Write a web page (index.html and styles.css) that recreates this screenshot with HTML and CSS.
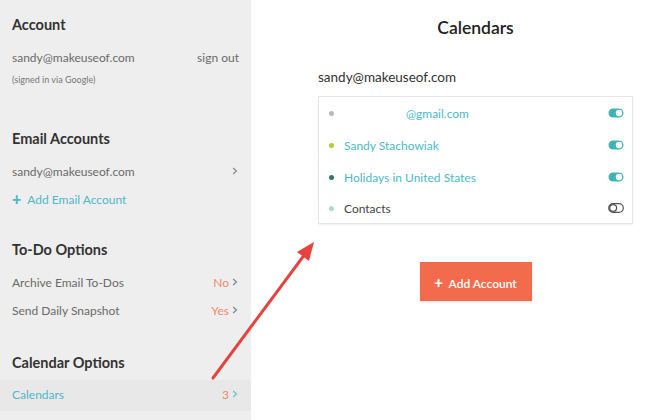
FILE: index.html
```html
<!DOCTYPE html>
<html>
<head>
<meta charset="utf-8">
<link rel="stylesheet" href="styles.css">
</head>
<body>
<div class="app">
  <aside class="sidebar">
    <h2 class="h h-first">Account</h2>
    <div class="row r-email"><span>sandy@makeuseof.com</span><span>sign out</span></div>
    <div class="note">(signed in via Google)</div>

    <h2 class="h h-sec">Email Accounts</h2>
    <div class="row r-item"><span>sandy@makeuseof.com</span><svg class="chev" width="6" height="8" viewBox="0 0 6 8"><path d="M1.2 1 L4.4 4 L1.2 7" fill="none" stroke="#8a8a8a" stroke-width="1.2"/></svg></div>
    <div class="row add"><span class="plus">+</span> Add Email Account</div>

    <h2 class="h h-sec2">To-Do Options</h2>
    <div class="row r-item"><span>Archive Email To-Dos</span><span class="right"><span class="val">No</span><svg class="chev" width="6" height="8" viewBox="0 0 6 8"><path d="M1.2 1 L4.4 4 L1.2 7" fill="none" stroke="#7d8aa0" stroke-width="1.3"/></svg></span></div>
    <div class="row"><span>Send Daily Snapshot</span><span class="right"><span class="val">Yes</span><svg class="chev" width="6" height="8" viewBox="0 0 6 8"><path d="M1.2 1 L4.4 4 L1.2 7" fill="none" stroke="#7d8aa0" stroke-width="1.3"/></svg></span></div>

    <h2 class="h h-sec3">Calendar Options</h2>
    <div class="row active"><span class="teal">Calendars</span><span class="right"><span class="val">3</span><svg class="chev" width="6" height="8" viewBox="0 0 6 8"><path d="M1.2 1 L4.4 4 L1.2 7" fill="none" stroke="#6cc3d4" stroke-width="1.3"/></svg></span></div>
  </aside>

  <main class="main">
    <div class="col">
      <h1 class="title">Calendars</h1>
      <div class="acct">sandy@makeuseof.com</div>
      <div class="card">
        <div class="cal"><span class="dot d1"></span><span class="name teal gm">@gmail.com</span>
          <svg class="tog" viewBox="0 0 16 10" width="16" height="10"><rect x="0.5" y="0.5" width="15" height="9" rx="4.5" fill="#3fb5b5"/><circle cx="11" cy="5" r="3.2" fill="#fff"/></svg></div>
        <div class="cal"><span class="dot d2"></span><span class="name teal">Sandy Stachowiak</span>
          <svg class="tog" viewBox="0 0 16 10" width="16" height="10"><rect x="0.5" y="0.5" width="15" height="9" rx="4.5" fill="#3fb5b5"/><circle cx="11" cy="5" r="3.2" fill="#fff"/></svg></div>
        <div class="cal"><span class="dot d3"></span><span class="name teal">Holidays in United States</span>
          <svg class="tog" viewBox="0 0 16 10" width="16" height="10"><rect x="0.5" y="0.5" width="15" height="9" rx="4.5" fill="#3fb5b5"/><circle cx="11" cy="5" r="3.2" fill="#fff"/></svg></div>
        <div class="cal"><span class="dot d4"></span><span class="name">Contacts</span>
          <svg class="tog" viewBox="0 0 16 10" width="16" height="10"><rect x="0.7" y="0.7" width="14.6" height="8.6" rx="4.3" fill="none" stroke="#555" stroke-width="1.2"/><circle cx="5.2" cy="5" r="3.4" fill="none" stroke="#555" stroke-width="1.2"/></svg></div>
      </div>
      <div class="btnwrap"><button class="btn"><span class="bplus">+</span> Add Account</button></div>
    </div>
  </main>

  <svg class="arrow" width="647" height="420" viewBox="0 0 647 420">
    <line x1="213" y1="378" x2="305" y2="254" stroke="#e4443c" stroke-width="3" stroke-linecap="round"/>
    <polygon points="314,242 297,252 309,261" fill="#e4443c"/>
  </svg>
</div>
</body>
</html>
```

FILE: styles.css
```css
* { box-sizing: border-box; margin: 0; padding: 0; }
html, body { width: 647px; height: 420px; overflow: hidden; background: #fff; }
body { font-family: Lato, "Open Sans", sans-serif; color: #333; }

.app { position: relative; display: flex; width: 647px; height: 420px; }

.sidebar {
  width: 251px;
  height: 420px;
  background: #eeeeee;
  padding-top: 15px;
  display: flex;
  flex-direction: column;
}
.h {
  font-size: 14.5px;
  font-weight: 700;
  color: #333;
  height: 20px;
  line-height: 20px;
  padding: 0 12px;
}
.h-sec { margin-top: 42px; }
.h-sec2 { margin-top: 27px; }
.h-sec3 { margin-top: 29px; }
.row {
  display: flex;
  justify-content: space-between;
  align-items: center;
  height: 28px;
  padding: 0 12px;
  font-size: 12px;
  color: #6a6a6a;
}
.right { display: flex; align-items: center; }
.r-email { margin-top: 8px; }
.r-item { margin-top: 8px; }
.note { font-size: 9px; color: #777; line-height: 14px; margin-top: 2px; padding: 0 12px; }
.add { color: #4db8c8; justify-content: flex-start; }
.plus { font-weight: 900; font-size: 16px; margin-right: 6px; line-height: 1; }
.chev { display: block; margin-left: 3px; margin-right: 1px; }
.val { color: #ef8a6c; }
.teal { color: #4db8c8; }
.active {
  margin-top: 7px;
  height: 31px;
  background: #e8e8e8;
  padding-bottom: 3px;
}

.main { flex: 1; padding-left: 67px; padding-right: 14px; }
.col { width: 315px; display: flex; flex-direction: column; }
.title {
  text-align: center;
  font-size: 17.5px;
  font-weight: 600;
  color: #222;
  line-height: 22px;
  margin-top: 17px;
}
.acct { font-size: 13.5px; color: #333; line-height: 20px; margin-top: 28px; }
.card {
  margin-top: 9px;
  border: 1px solid #e6e6e6;
  box-shadow: 0 1px 2px rgba(0,0,0,0.06);
}
.cal {
  display: flex;
  align-items: center;
  height: 32px;
  padding: 0 8px 0 10px;
  font-size: 12px;
  color: #444;
}
.cal:last-child { height: 30px; }
.dot { width: 5px; height: 5px; border-radius: 50%; margin-right: 10px; }
.d1 { background: #b8b8b8; }
.d2 { background: #b9c93a; }
.d3 { background: #2f7a5c; }
.d4 { background: #a6dcd4; }
.name { flex: 1; }
.gm { padding-left: 62px; }
.tog { display: block; }

.btnwrap { display: flex; justify-content: center; margin-top: 38px; }
.btn {
  width: 112px;
  height: 39px;
  border: none;
  background: #f36b4d;
  color: #fff;
  font-family: Lato, sans-serif;
  font-size: 12px;
  font-weight: 600;
  box-shadow: 0 1px 2px rgba(0,0,0,0.12);
}
.bplus { font-weight: 900; font-size: 15px; margin-right: 3px; }

.arrow { position: absolute; left: 0; top: 0; pointer-events: none; }
```
